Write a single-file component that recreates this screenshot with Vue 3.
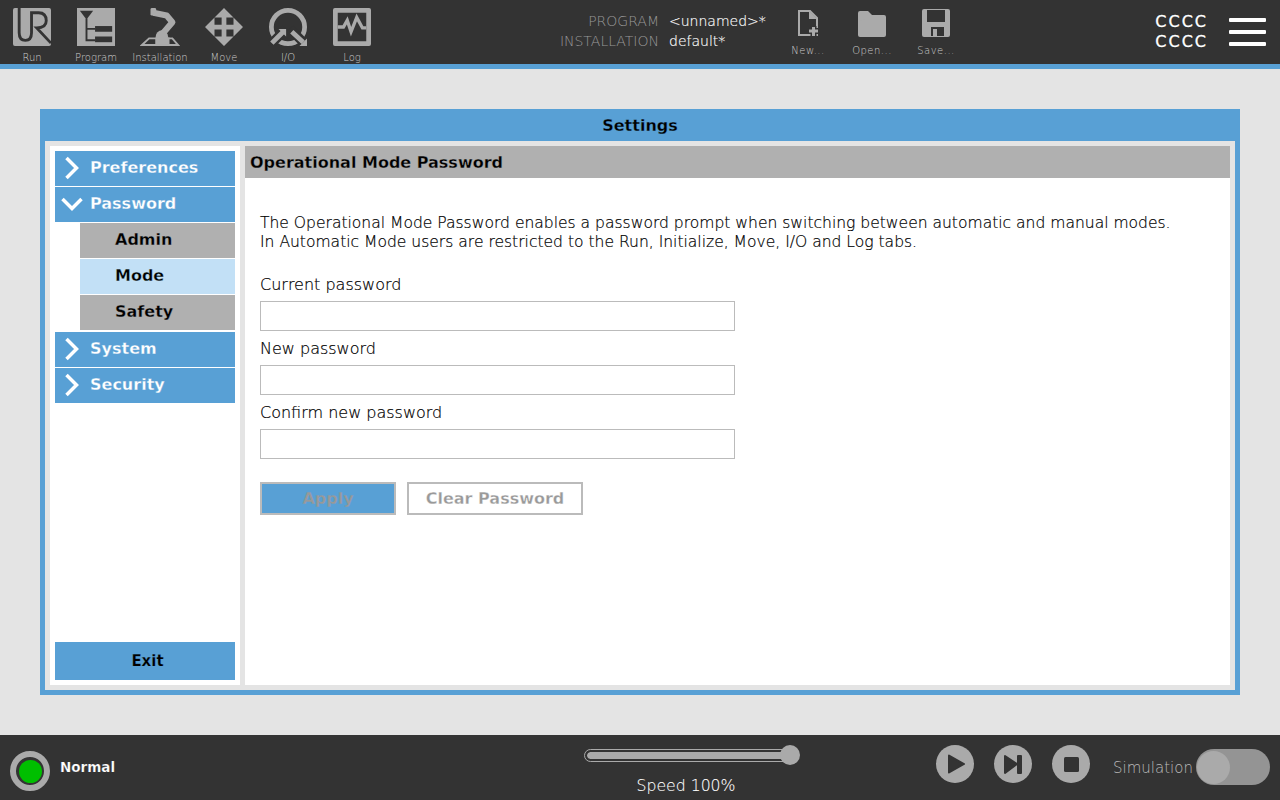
<script setup>
const tabs = ['Run', 'Program', 'Installation', 'Move', 'I/O', 'Log']
const files = ['New...', 'Open...', 'Save...']
const fields = ['Current password', 'New password', 'Confirm new password']
</script>

<template>
  <div class="page">
    <header class="top">
      <nav class="tabs">
        <div v-for="(t, i) in tabs" :key="t" class="tab">
          <svg v-if="i === 0" class="ticon" viewBox="0 0 40 40">
            <rect width="40" height="40" rx="2" fill="#aaa" />
            <path d="M6.500 0V26Q6.500 34 13 34Q19.500 34 19.500 26V5H27Q35 5 35 13.500Q35 21 25 21L40 37" fill="none" stroke="#333" stroke-width="3" />
          </svg>
          <svg v-else-if="i === 1" class="ticon" viewBox="0 0 40 40">
            <rect width="40" height="40" fill="#aaa" />
            <path d="M3 3H17L10 12Z" fill="#333" />
            <path d="M10 11V34H19M10 22H19" fill="none" stroke="#333" stroke-width="2" />
            <rect x="19" y="19" width="18" height="6" fill="#333" />
            <rect x="19" y="30" width="18" height="6" fill="#333" />
          </svg>
          <svg v-else-if="i === 2" class="ticon" viewBox="0 0 40 40">
            <path d="M1 39L8.500 32H33L39 39Z" fill="none" stroke="#aaa" stroke-width="2" />
            <path d="M13 5L27 8L33 15L22 28" fill="none" stroke="#aaa" stroke-width="6.500" stroke-linejoin="round" />
            <rect x="10" y="0" width="6" height="8" rx="1.500" fill="#aaa" />
            <circle cx="22" cy="30" r="6.500" fill="#aaa" />
            <rect x="15" y="31" width="15" height="7" fill="#aaa" />
          </svg>
          <svg v-else-if="i === 3" class="ticon" viewBox="0 0 40 40">
            <path d="M20 0L30 10H22.500V17.500H30V10L40 20L30 30V22.500H22.500V30H30L20 40L10 30H17.500V22.500H10V30L0 20L10 10V17.500H17.500V10H10Z" fill="#aaa" />
          </svg>
          <svg v-else-if="i === 4" class="ticon" viewBox="0 0 40 40">
            <circle cx="20" cy="20" r="17.500" fill="none" stroke="#aaa" stroke-width="5" />
            <path d="M0 40L18 22M22 22L40 40" stroke="#333" stroke-width="10" />
            <path d="M3 37L15 25M24 25L36 36" stroke="#aaa" stroke-width="5" />
            <path d="M10 22H18V30ZM40 32V40H32Z" fill="#aaa" />
          </svg>
          <svg v-else class="ticon" viewBox="0 0 40 40">
            <rect width="40" height="40" rx="2" fill="#aaa" />
            <rect x="5" y="5" width="30" height="30" fill="#333" />
            <path d="M5 20H11L15 13L19 25L25 10L31 21H35" fill="none" stroke="#aaa" stroke-width="3.500" />
          </svg>
          <span class="tlabel">{{ t }}</span>
        </div>
      </nav>
      <div class="info">
        <div class="keys"><span>PROGRAM</span><span>INSTALLATION</span></div>
        <div class="vals"><span>&lt;unnamed&gt;*</span><span>default*</span></div>
      </div>
      <div class="files">
        <div v-for="(f, i) in files" :key="f" class="file">
          <svg v-if="i === 0" class="ficon" viewBox="0 0 30 30">
            <path d="M6 2H17L24 9V26H6Z" fill="none" stroke="#aaa" stroke-width="2" />
            <path d="M16 2V10H24" fill="#aaa" />
            <path d="M15 22H26M20.500 17V28" stroke="#333" stroke-width="6" />
            <path d="M16 22H25M20.500 18V27" stroke="#aaa" stroke-width="3" />
          </svg>
          <svg v-else-if="i === 1" class="ficon" viewBox="0 0 30 30">
            <path d="M1 12V4Q1 2 3 2H11L15 6H27Q29 6 29 8V12Z" fill="#aaa" />
            <path d="M1 12L10 10H29V26Q29 28 27 28H3Q1 28 1 26Z" fill="#aaa" />
          </svg>
          <svg v-else class="ficon" viewBox="0 0 30 30">
            <path d="M3 0H27Q29 0 29 2V26Q29 28 27 28H3Q1 28 1 26V2Q1 0 3 0Z" fill="#aaa" />
            <rect x="6" y="1" width="18" height="12" fill="#333" />
            <rect x="10" y="18" width="13" height="9" fill="#333" />
            <rect x="12" y="20" width="4" height="7" fill="#aaa" />
          </svg>
          <span class="flabel">{{ f }}</span>
        </div>
      </div>
      <div class="spacer"></div>
      <div class="user"><span>CCCC</span><span>CCCC</span></div>
      <div class="burger"><i></i><i></i><i></i></div>
    </header>

    <main class="main">
      <section class="window">
        <h1 class="wtitle">Settings</h1>
        <div class="panes">
          <aside class="side">
            <div class="menu">
              <div class="item">
                <svg class="chev" viewBox="0 0 24 24"><path d="M6.500 2L16.500 12L6.500 22" /></svg>
                <span>Preferences</span>
              </div>
              <div class="item">
                <svg class="chev" viewBox="0 0 24 24"><path d="M2.500 7L12 16.500L21.500 7" /></svg>
                <span>Password</span>
              </div>
              <div class="sub">Admin</div>
              <div class="sub active">Mode</div>
              <div class="sub">Safety</div>
              <div class="item gaptop">
                <svg class="chev" viewBox="0 0 24 24"><path d="M6.500 2L16.500 12L6.500 22" /></svg>
                <span>System</span>
              </div>
              <div class="item">
                <svg class="chev" viewBox="0 0 24 24"><path d="M6.500 2L16.500 12L6.500 22" /></svg>
                <span>Security</span>
              </div>
            </div>
            <div class="exit">Exit</div>
          </aside>
          <div class="content">
            <h2 class="chead">Operational Mode Password</h2>
            <div class="cbody">
              <p class="desc">
                The Operational Mode Password enables a password prompt when switching between automatic and manual modes.<br />
                In Automatic Mode users are restricted to the Run, Initialize, Move, I/O and Log tabs.
              </p>
              <div class="fields">
                <div v-for="f in fields" :key="f" class="field">
                  <label>{{ f }}</label>
                  <div class="input"></div>
                </div>
              </div>
              <div class="actions">
                <button class="btn apply">Apply</button>
                <button class="btn clear">Clear Password</button>
              </div>
            </div>
          </div>
        </div>
      </section>
    </main>

    <footer class="bottom">
      <div class="status">
        <div class="led"><i></i></div>
        <span>Normal</span>
      </div>
      <div class="speed">
        <div class="slider"><div class="fill"></div><div class="knob"></div></div>
        <span>Speed 100%</span>
      </div>
      <div class="controls">
        <svg class="ctl" viewBox="0 0 38 38"><circle cx="19" cy="19" r="19" fill="#aaa" /><path d="M13 10.500L28 19L13 27.500Z" fill="#333" stroke="#333" stroke-width="2" stroke-linejoin="round" /></svg>
        <svg class="ctl" viewBox="0 0 38 38"><circle cx="19" cy="19" r="19" fill="#aaa" /><path d="M11 11L23 19L11 28Z" fill="#333" stroke="#333" stroke-width="2" stroke-linejoin="round" /><rect x="23" y="10" width="5" height="19" rx="1" fill="#333" /></svg>
        <svg class="ctl" viewBox="0 0 38 38"><circle cx="19" cy="19" r="19" fill="#aaa" /><rect x="12" y="12" width="15" height="15" rx="1.500" fill="#333" /></svg>
      </div>
      <div class="sim">
        <span>Simulation</span>
        <div class="toggle"><i></i></div>
      </div>
    </footer>
  </div>
</template>

<style>
html, body { margin: 0; padding: 0; background: #e4e4e4; }
</style>

<style scoped>
* { box-sizing: border-box; }
.page {
  width: 1280px;
  height: 800px;
  display: flex;
  flex-direction: column;
  overflow: hidden;
  font-family: "DejaVu Sans", sans-serif;
  color: #000;
  background: #e4e4e4;
}

/* top bar */
.top {
  height: 69px;
  flex: none;
  display: flex;
  background: #333;
  border-bottom: 5px solid #58a0d5;
}
.tabs { display: flex; }
.tab {
  width: 64px;
  display: flex;
  flex-direction: column;
  align-items: center;
  padding-top: 8px;
}
.ticon { width: 40px; height: 40px; display: block; }
.tlabel { font-size: 10px; font-weight: 200; line-height: 12px; margin-top: 6px; color: #ccc; white-space: nowrap; }
.info {
  display: flex;
  gap: 10px;
  margin-left: 150px;
  padding-top: 11px;
  font-size: 14px;
  font-weight: 200;
  line-height: 20px;
  width: 240px;
}
.keys, .vals { display: flex; flex-direction: column; }
.keys { align-items: flex-end; color: #999; width: 125px; }
.vals { color: #fff; white-space: nowrap; -webkit-text-stroke: .15px #fff; }
.files { display: flex; margin-left: 2px; }
.file {
  width: 64px;
  display: flex;
  flex-direction: column;
  align-items: center;
  padding-top: 9px;
}
.ficon { width: 30px; height: 30px; display: block; }
.flabel { font-size: 10px; font-weight: 200; line-height: 12px; margin-top: 6px; color: #ccc; letter-spacing: .5px; white-space: nowrap; }
.spacer { flex: 1; }
.user {
  display: flex;
  flex-direction: column;
  padding-top: 12px;
  margin-right: 21px;
  color: #fff;
  font-size: 16px;
  line-height: 20px;
  letter-spacing: 2px;
  -webkit-text-stroke: .3px #fff;
}
.burger {
  width: 37px;
  margin-right: 14px;
  padding-top: 18px;
  display: flex;
  flex-direction: column;
  gap: 8px;
}
.burger i { display: block; height: 4px; background: #fff; border-radius: 1px; }

/* window */
.main { flex: 1; padding: 40px 40px; min-height: 0; }
.window {
  height: 586px;
  display: flex;
  flex-direction: column;
  background: #58a0d5;
}
.wtitle {
  margin: 0;
  height: 32px;
  flex: none;
  text-align: center;
  font-size: 16px;
  font-weight: 700;
  line-height: 33px;
  -webkit-text-stroke: .3px #58a0d5;
}
.panes {
  flex: 1;
  min-height: 0;
  margin: 0 5px 5px;
  padding: 5px;
  display: flex;
  gap: 5px;
  background: #e4e4e4;
}
.side {
  width: 190px;
  padding: 5px;
  background: #fff;
  display: flex;
  flex-direction: column;
  justify-content: space-between;
}
.menu { display: flex; flex-direction: column; gap: 1px; }
.item {
  height: 35px;
  display: flex;
  align-items: center;
  background: #58a0d5;
  color: #fff;
  font-size: 16px;
  font-weight: 700;
  padding-bottom: 3px;
  position: relative;
  -webkit-text-stroke: .3px #58a0d5;
}
.item span { margin-left: 35px; }
.chev {
  position: absolute;
  left: 5px;
  top: 5px;
  width: 24px;
  height: 24px;
  fill: none;
  stroke: #fff;
  stroke-width: 3.500;
}
.gaptop { margin-top: 1px; }
.sub {
  height: 35px;
  margin-left: 25px;
  padding-left: 35px;
  background: #b0b0b0;
  font-size: 16px;
  font-weight: 700;
  line-height: 34px;
  -webkit-text-stroke: .3px #b0b0b0;
}
.sub.active { background: #c2e0f6; -webkit-text-stroke-color: #c2e0f6; }
.exit {
  height: 38px;
  background: #58a0d5;
  text-align: center;
  font-size: 15px;
  font-weight: 700;
  line-height: 39px;
  padding-left: 5px;
  -webkit-text-stroke: .25px #58a0d5;
}
.content {
  flex: 1;
  display: flex;
  flex-direction: column;
  background: #fff;
}
.chead {
  margin: 0;
  height: 32px;
  flex: none;
  padding-left: 5px;
  background: #b0b0b0;
  font-size: 16px;
  font-weight: 700;
  line-height: 33px;
  -webkit-text-stroke: .3px #b0b0b0;
}
.cbody { padding: 36px 15px 0; font-size: 16px; font-weight: 200; }
.desc { margin: 0; line-height: 19px; font-size: 15.55px; -webkit-text-stroke: .2px #000; }
.fields { margin-top: 21px; display: flex; flex-direction: column; gap: 6px; }
.field label { display: block; height: 28px; line-height: 23px; -webkit-text-stroke: .2px #000; }
.input { width: 475px; height: 30px; border: 1px solid #bbb; background: #fff; }
.actions { margin-top: 23px; display: flex; gap: 11px; }
.btn {
  height: 33px;
  padding: 0;
  border: 2px solid #bbb;
  font-family: inherit;
  font-size: 16px;
  font-weight: 700;
  color: #999;
}
.apply { width: 136px; background: #58a0d5; -webkit-text-stroke: .3px #58a0d5; }
.clear { width: 176px; background: #fff; -webkit-text-stroke: .3px #fff; }

/* bottom bar */
.bottom {
  height: 65px;
  flex: none;
  background: #333;
  display: flex;
  position: relative;
}
.status {
  display: flex;
  align-items: flex-start;
  gap: 10px;
  padding: 16px 0 0 10px;
  width: 584px;
  color: #fff;
  font-size: 13.5px;
  font-weight: 700;
  -webkit-text-stroke: .2px #333;
}
.status span { margin-top: 8px; }
.led {
  width: 40px;
  height: 40px;
  border-radius: 50%;
  border: 6px solid #aaa;
  background: #333;
  display: flex;
  align-items: center;
  justify-content: center;
}
.led i { display: block; width: 23px; height: 23px; border-radius: 50%; background: #00bf00; }
.speed {
  width: 216px;
  display: flex;
  flex-direction: column;
  align-items: center;
  padding-top: 10px;
  color: #fff;
  font-size: 16px;
  font-weight: 200;
}
.speed span { margin-top: 11px; margin-left: -12px; line-height: 20px; white-space: nowrap; font-size: 15.7px; -webkit-text-stroke: .1px #fff; }
.slider {
  width: 216px;
  height: 20px;
  position: relative;
  display: flex;
  align-items: center;
}
.fill {
  width: 210px;
  height: 13px;
  border: 1px solid #aaa;
  border-radius: 7px;
  padding: 2px;
  background: #aaa content-box;
  box-shadow: inset 0 0 0 2px #333;
}
.knob {
  position: absolute;
  right: 0;
  top: 0;
  width: 20px;
  height: 20px;
  border-radius: 50%;
  background: #aaa;
}
.controls { display: flex; gap: 20px; margin-left: 136px; padding-top: 10px; }
.ctl { width: 38px; height: 38px; display: block; }
.sim {
  display: flex;
  align-items: flex-start;
  margin-left: 23px;
  padding-top: 14px;
  color: #bbb;
  font-size: 15px;
  font-weight: 200;
}
.sim span { margin-top: 9px; line-height: 20px; width: 83px; }
.toggle {
  width: 74px;
  height: 36px;
  border-radius: 18px;
  background: #949494;
  padding: 2px 0 0 1px;
}
.toggle i { display: block; width: 33px; height: 33px; border-radius: 50%; background: #aaa; }
</style>
